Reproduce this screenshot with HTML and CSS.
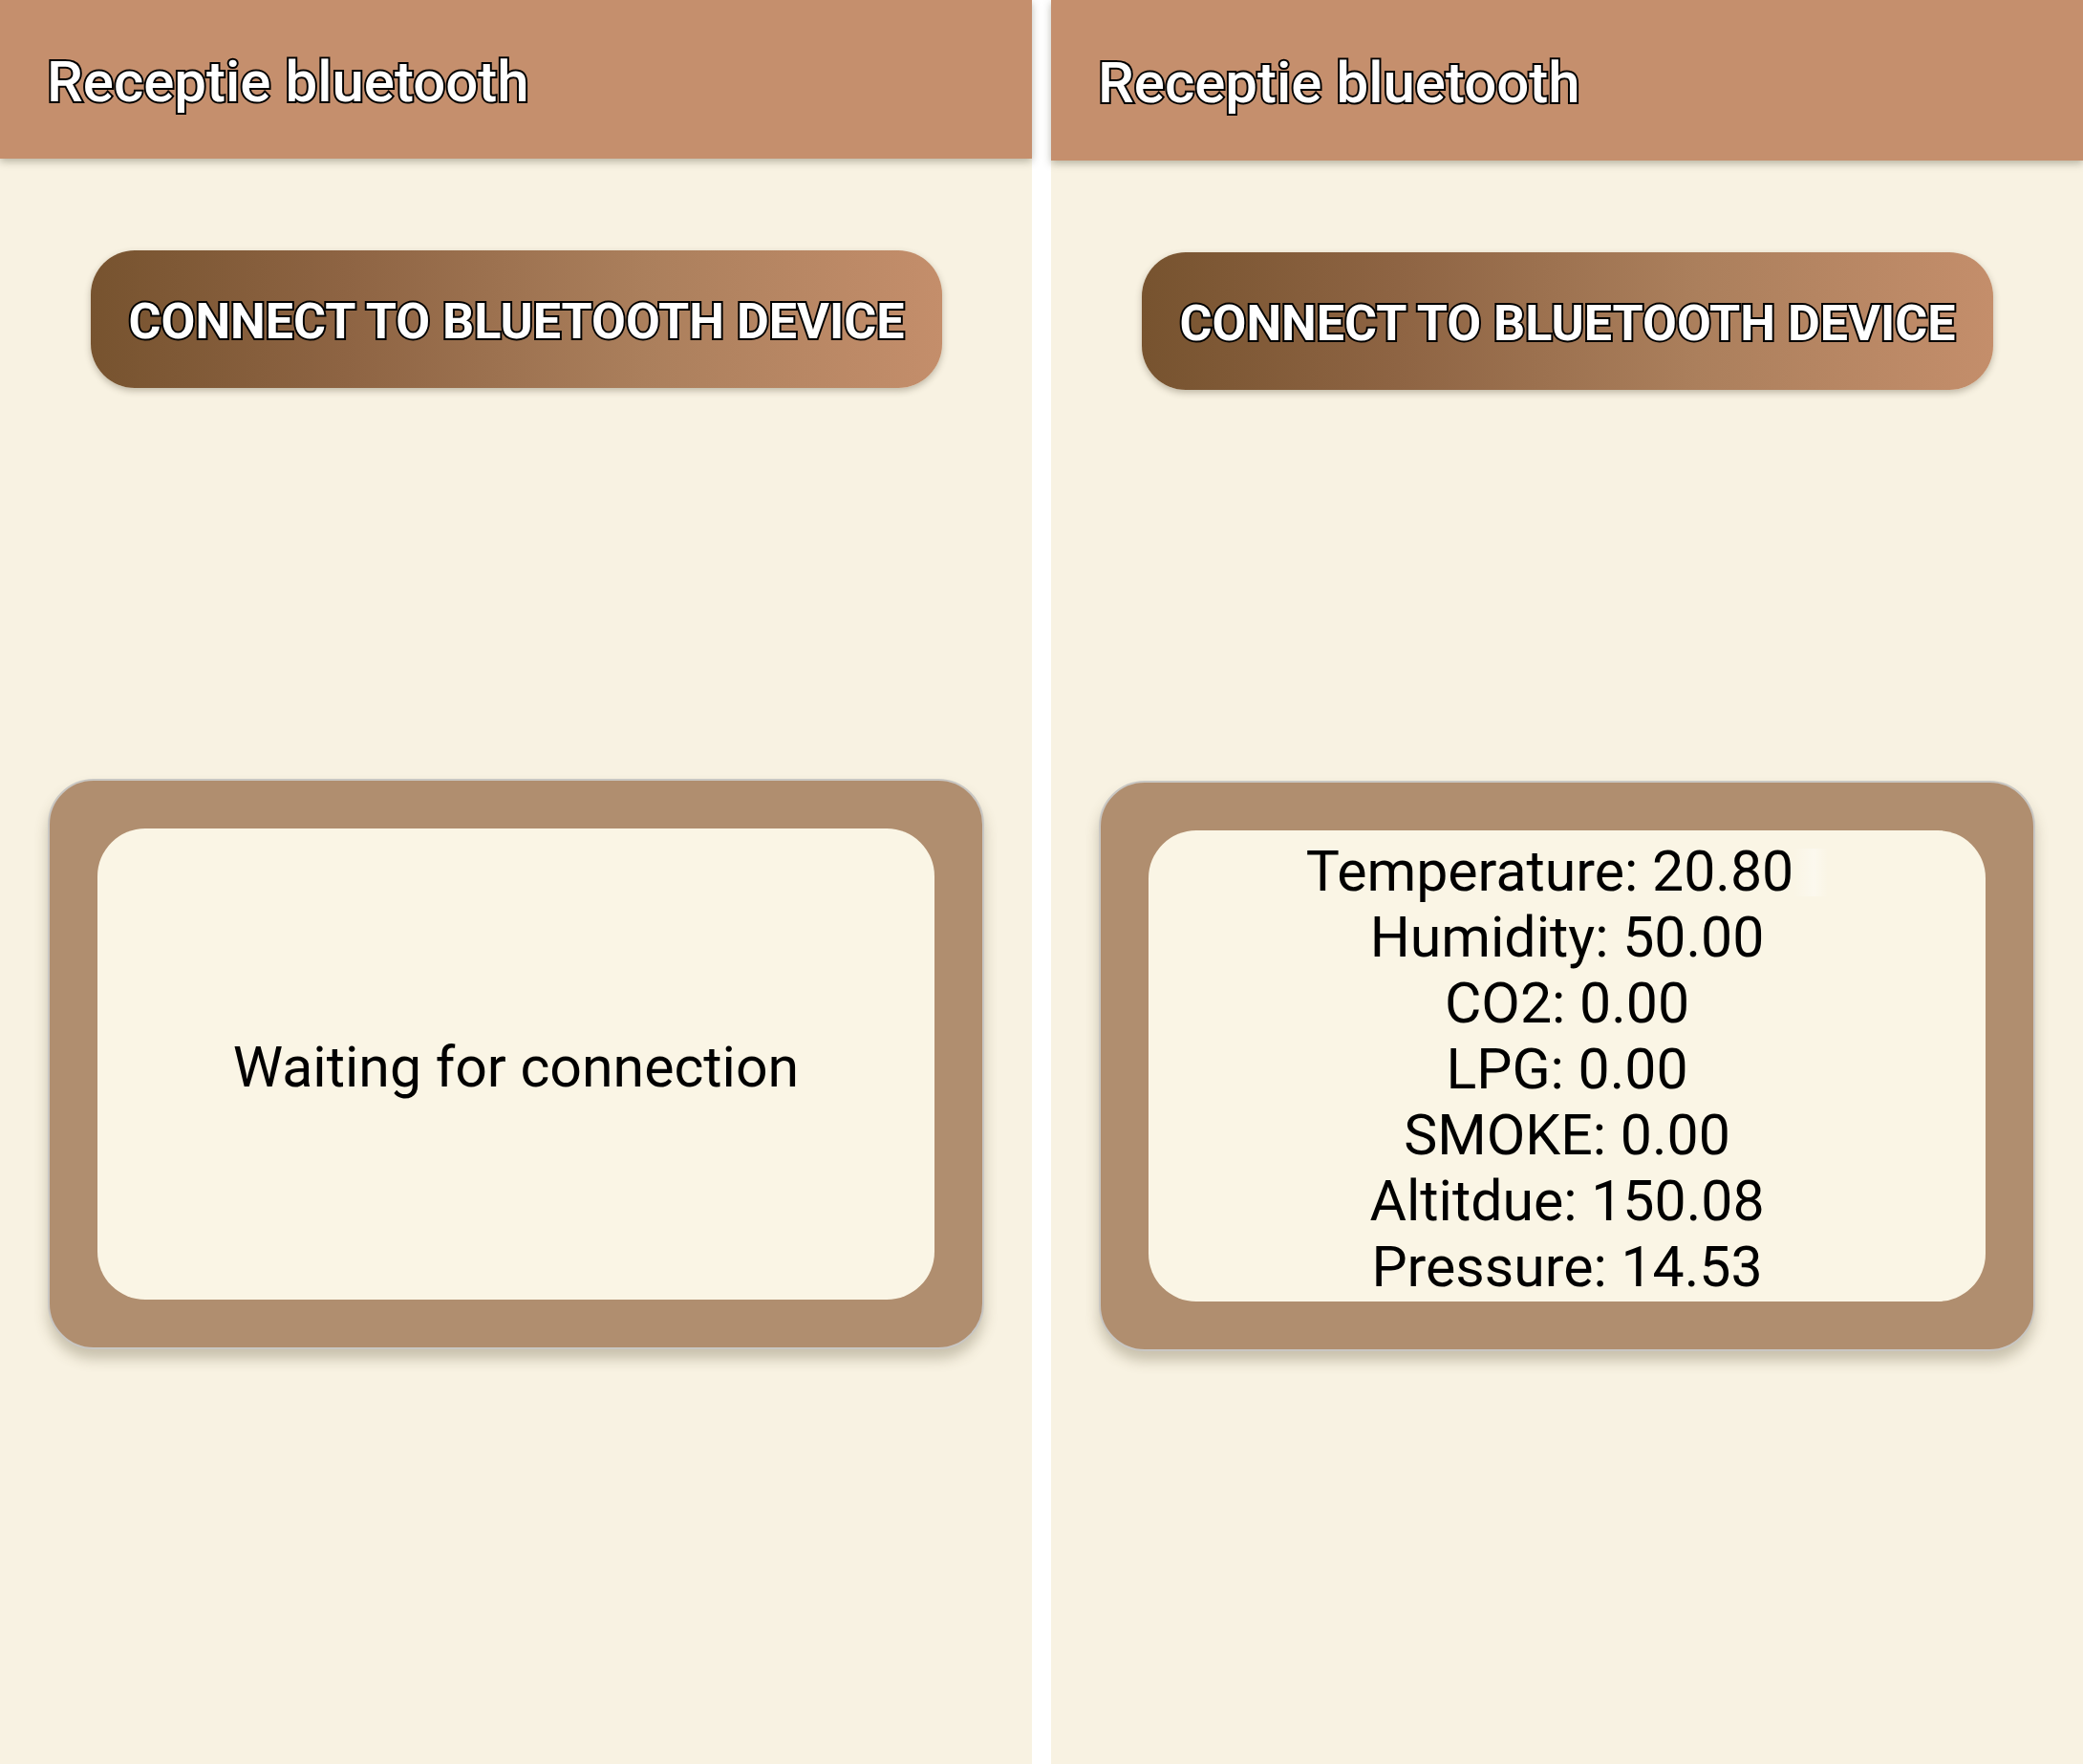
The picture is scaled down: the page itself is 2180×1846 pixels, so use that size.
FILE: index.html
```html
<!DOCTYPE html>
<html lang="nl">
<head>
<meta charset="utf-8">
<title>Receptie bluetooth</title>
<link rel="stylesheet" href="styles.css">
</head>
<body>
  <div class="screens">
    <section class="phone">
      <header class="appbar"><h1 class="appbar__title">Receptie bluetooth</h1></header>
      <main class="content">
        <button class="connect-btn" type="button">CONNECT TO BLUETOOTH DEVICE</button>
        <div class="card">
          <div class="card__inner">
            <p class="card__text">Waiting for connection</p>
          </div>
        </div>
      </main>
    </section>
    <section class="phone phone--shifted">
      <header class="appbar"><h1 class="appbar__title">Receptie bluetooth</h1></header>
      <main class="content">
        <button class="connect-btn" type="button">CONNECT TO BLUETOOTH DEVICE</button>
        <div class="card">
          <div class="card__inner">
            <p class="card__text">Temperature: 20.80<span class="ghost"></span><br>Humidity: 50.00<br>CO2: 0.00<br>LPG: 0.00<br>SMOKE: 0.00<br>Altitdue: 150.08<br>Pressure: 14.53</p>
          </div>
        </div>
      </main>
    </section>
  </div>
</body>
</html>
```
FILE: styles.css
```css
* { box-sizing: border-box; }

html, body {
  margin: 0;
  padding: 0;
  background: #ffffff;
}

body {
  font-family: Roboto, "Noto Sans", sans-serif;
}

.screens {
  display: flex;
  gap: 20px;
  width: 2180px;
  height: 1846px;
  overflow: hidden;
}

.phone {
  width: 1080px;
  height: 1846px;
  background: #f8f2e2;
  display: flex;
  flex-direction: column;
}

.appbar {
  height: 166px;
  flex: none;
  background: #c58f6d;
  box-shadow: 0 3px 8px rgba(60, 60, 40, 0.35);
  padding: 56px 0 0 49px;
  position: relative;
  z-index: 1;
}

.phone--shifted .appbar {
  height: 168px;
  padding-top: 57px;
}

.appbar__title {
  margin: 0;
  font-family: Roboto, sans-serif;
  font-weight: 500;
  font-size: 60px;
  line-height: 1;
  color: #ffffff;
  -webkit-text-stroke: 4px #000000;
  paint-order: stroke fill;
}

.content {
  display: flex;
  flex-direction: column;
  align-items: flex-start;
}

.connect-btn {
  margin: 96px 0 0 95px;
  width: 891px;
  height: 144px;
  border: none;
  border-radius: 46px;
  background: linear-gradient(90deg, #77532f 0%, #8e6443 30%, #ab7f5c 65%, #c48e6b 100%);
  box-shadow: 0 3px 7px rgba(60, 50, 30, 0.3);
  font-family: Roboto, sans-serif;
  font-weight: 700;
  font-size: 52px;
  color: #ffffff;
  -webkit-text-stroke: 4px #000000;
  paint-order: stroke fill;
  padding: 4px 0 0;
  text-align: center;
}

.card {
  margin: 409px 0 0 50px;
  width: 980px;
  height: 597px;
  background: #b08e6f;
  border: 2px solid #c9c7c3;
  border-radius: 48px;
  padding: 50px;
  box-shadow: 0 10px 14px rgba(90, 80, 50, 0.3);
}

.card__inner {
  width: 100%;
  height: 100%;
  background: #faf5e5;
  border-radius: 50px;
  display: flex;
  align-items: center;
  justify-content: center;
}

.card__text {
  margin: 0;
  padding-top: 5px;
  font-family: Roboto, sans-serif;
  font-weight: 400;
  font-size: 59px;
  line-height: 69px;
  color: #000000;
  text-align: center;
}

.ghost {
  display: inline-block;
  width: 36px;
  height: 50px;
  vertical-align: -6px;
  background: linear-gradient(90deg, rgba(255,255,255,0) 0%, rgba(255,255,255,0.35) 60%, rgba(255,255,255,0) 100%);
}
```
